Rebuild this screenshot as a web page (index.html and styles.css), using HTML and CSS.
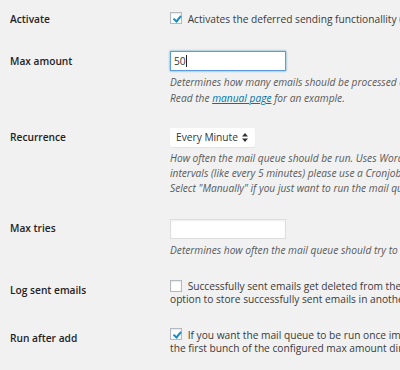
FILE: index.html
```html
<!DOCTYPE html>
<html lang="en">
<head>
<meta charset="utf-8">
<title>Mail Queue Settings</title>
<link rel="stylesheet" href="styles.css">
</head>
<body>
<div class="form-table">
  <div class="row">
    <div class="th">Activate</div>
    <div class="td">
      <label class="check-label"><span class="checkbox checked"></span> Activates the deferred sending functionallity (mails are queued)</label>
    </div>
  </div>
  <div class="row">
    <div class="th">Max amount</div>
    <div class="td">
      <div class="input focused">50<span class="caret"></span></div>
      <p class="description">Determines how many emails should be processed during one run.<br>Read the <a href="#">manual page</a> for an example.</p>
    </div>
  </div>
  <div class="row">
    <div class="th">Recurrence</div>
    <div class="td">
      <div class="select"><span>Every Minute</span><svg class="arrows" width="6" height="9" viewBox="0 0 6 9"><path d="M3 0 L6 3.5 H0 Z M3 9 L0 5.5 H6 Z" fill="#333"/></svg></div>
      <p class="description">How often the mail queue should be run. Uses WordPress cron; for shorter<br>intervals (like every 5 minutes) please use a Cronjob on your server.<br>Select "Manually" if you just want to run the mail queue by hand.</p>
    </div>
  </div>
  <div class="row">
    <div class="th">Max tries</div>
    <div class="td">
      <div class="input"></div>
      <p class="description">Determines how often the mail queue should try to send an email.</p>
    </div>
  </div>
  <div class="row">
    <div class="th">Log sent emails</div>
    <div class="td">
      <label class="check-label"><span class="checkbox"></span> Successfully sent emails get deleted from the queue. Activate this<br>option to store successfully sent emails in another table.</label>
    </div>
  </div>
  <div class="row">
    <div class="th">Run after add</div>
    <div class="td">
      <label class="check-label"><span class="checkbox checked"></span> If you want the mail queue to be run once immediately after adding,<br>the first bunch of the configured max amount directly gets sent.</label>
    </div>
  </div>
</div>
</body>
</html>
```
FILE: styles.css
```css
html, body {
  margin: 0;
  padding: 0;
  background: #f1f1f1;
  overflow: hidden;
}
body {
  font-family: "Open Sans", "DejaVu Sans", sans-serif;
  font-size: 10.2px;
  color: #3a3a3a;
  width: 400px;
  height: 370px;
}
.form-table {
  margin: -2px 0 0 10px;
  overflow: hidden;
}
.row {
  display: grid;
  grid-template-columns: 160px max-content;
}
.th {
  align-self: start;
  padding: 14.5px 0;
  line-height: 13.3px;
  font-weight: 600;
  color: #1f2326;
}
.td {
  align-self: center;
  padding: 11px 0;
  line-height: 13.3px;
  white-space: nowrap;
}
.check-label {
  display: block;
}
.checkbox {
  display: inline-block;
  box-sizing: border-box;
  width: 12px;
  height: 12px;
  margin: -3px 3px 0 0;
  vertical-align: middle;
  background: #fff;
  border: 1px solid #b4b9be;
  box-shadow: inset 0 1px 2px rgba(0,0,0,0.1);
  position: relative;
}
.checkbox.checked::after {
  content: "";
  position: absolute;
  left: 3.5px;
  top: 1px;
  width: 2.5px;
  height: 5.5px;
  border-right: 2px solid #1e8cbe;
  border-bottom: 2px solid #1e8cbe;
  transform: rotate(40deg);
}
.input {
  box-sizing: border-box;
  width: 116px;
  height: 20px;
  padding: 0 3px;
  background: #fff;
  border: 1px solid #ddd;
  box-shadow: inset 0 1px 2px rgba(0,0,0,0.07);
  line-height: 18px;
  font-size: 10.2px;
  color: #32373c;
  display: flex;
  align-items: center;
}
.input.focused {
  border-color: #5b9dd9;
  box-shadow: 0 0 2px rgba(30,140,190,0.8);
}
.caret {
  display: inline-block;
  width: 1px;
  height: 12px;
  background: #222;
  margin-left: 0.5px;
}
.select {
  box-sizing: border-box;
  display: inline-flex;
  align-items: center;
  justify-content: space-between;
  width: 85px;
  height: 19px;
  padding: 0 7px 0 6px;
  background: #fff;
  border-radius: 2px;
  box-shadow: 0 1px 1px rgba(0,0,0,0.06);
  color: #32373c;
  vertical-align: top;
}
.arrows {
  display: block;
}
.description {
  margin: 4px 0 0;
  line-height: 15.3px;
  font-style: italic;
  color: #5a5a5a;
}
.description a {
  color: #0073aa;
  text-decoration: underline;
}
```
